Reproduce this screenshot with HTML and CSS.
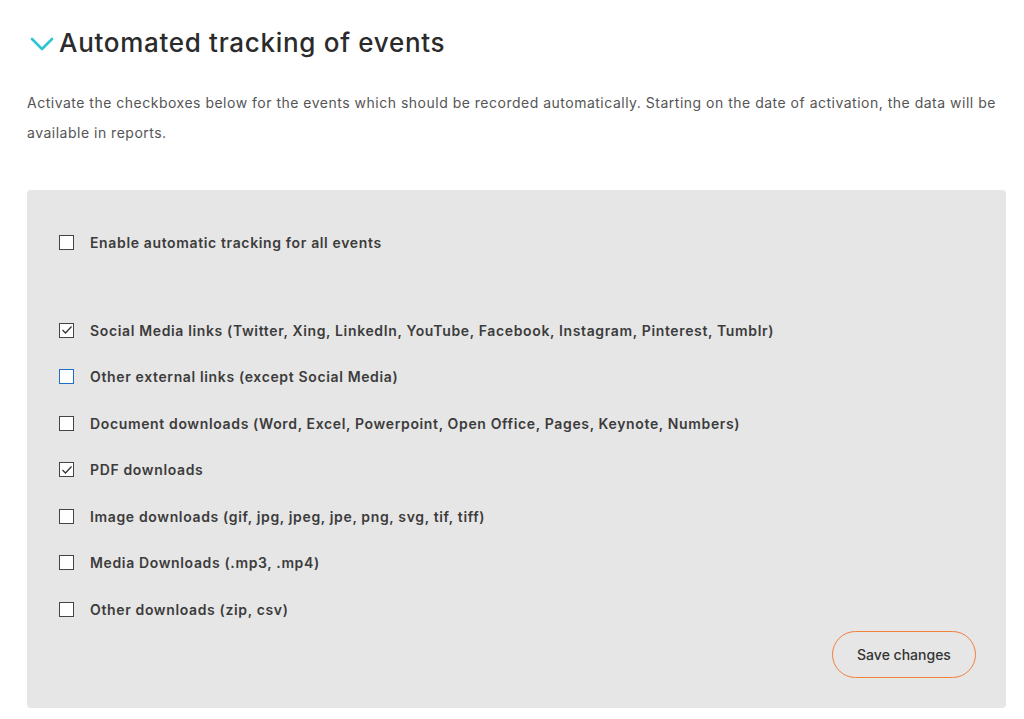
FILE: index.html
```html
<!DOCTYPE html>
<html lang="en">
<head>
<meta charset="utf-8">
<title>Automated tracking of events</title>
<link rel="stylesheet" href="styles.css">
</head>
<body>
<main class="page">
  <h1 class="title">
    <svg class="chevron" width="24" height="14" viewBox="0 0 24 14" aria-hidden="true"><path d="M2 2 L12 12 L22 2" fill="none" stroke="#2ec4d0" stroke-width="2.6" stroke-linecap="round" stroke-linejoin="round"/></svg>
    <span>Automated tracking of events</span>
  </h1>
  <p class="intro">Activate the checkboxes below for the events which should be recorded automatically. Starting on the date of activation, the data will be available in reports.</p>
  <section class="panel">
    <label class="row row-all"><span class="box"></span><span class="lbl">Enable automatic tracking for all events</span></label>
    <div class="list">
      <label class="row"><span class="box checked"><svg width="12" height="10" viewBox="0 0 12 10"><path d="M1.5 5 L4.5 8 L10.5 1.5" fill="none" stroke="#333" stroke-width="1.3"/></svg></span><span class="lbl">Social Media links (Twitter, Xing, LinkedIn, YouTube, Facebook, Instagram, Pinterest, Tumblr)</span></label>
      <label class="row"><span class="box focus"></span><span class="lbl">Other external links (except Social Media)</span></label>
      <label class="row"><span class="box"></span><span class="lbl">Document downloads (Word, Excel, Powerpoint, Open Office, Pages, Keynote, Numbers)</span></label>
      <label class="row"><span class="box checked"><svg width="12" height="10" viewBox="0 0 12 10"><path d="M1.5 5 L4.5 8 L10.5 1.5" fill="none" stroke="#333" stroke-width="1.3"/></svg></span><span class="lbl">PDF downloads</span></label>
      <label class="row"><span class="box"></span><span class="lbl">Image downloads (gif, jpg, jpeg, jpe, png, svg, tif, tiff)</span></label>
      <label class="row"><span class="box"></span><span class="lbl">Media Downloads (.mp3, .mp4)</span></label>
      <label class="row"><span class="box"></span><span class="lbl">Other downloads (zip, csv)</span></label>
    </div>
    <div class="actions"><button class="save" type="button">Save changes</button></div>
  </section>
</main>
</body>
</html>
```
FILE: styles.css
```css
* { box-sizing: border-box; }
html, body { margin: 0; background: #fff; }
body { font-family: Inter, "Open Sans", sans-serif; color: #333; }
.page { padding: 24px 18px 0 27px; }
.title { display: flex; align-items: center; gap: 5px; margin: 0; font-size: 26px; font-weight: 500; color: #2b2b2b; height: 36px; letter-spacing: 0.7px; }
.chevron { margin-top: 4px; margin-left: 3px; }
.intro { margin: 28px 0 0; font-size: 14px; line-height: 30px; color: #555; letter-spacing: 0.5px; }
.panel { margin-top: 42px; background: #e6e6e6; border-radius: 4px; padding: 43px 30px 30px 32px; }
.row { display: flex; align-items: center; gap: 16px; height: 18px; font-size: 14px; font-weight: 600; color: #3c3c3c; letter-spacing: 0.64px; }
.list { margin-top: 70px; display: flex; flex-direction: column; gap: 28.5px; }
.box { width: 15px; height: 15px; border: 1.5px solid #444; background: #fff; flex: none; display: flex; align-items: center; justify-content: center; }
.box.focus { border-color: #1f6fc5; }
.actions { display: flex; justify-content: flex-end; margin-top: 13px; }
.save { width: 144px; height: 47px; border: 1.5px solid #f0803c; border-radius: 24px; background: transparent; font-family: inherit; font-size: 14px; color: #333; font-weight: 500; }
```
